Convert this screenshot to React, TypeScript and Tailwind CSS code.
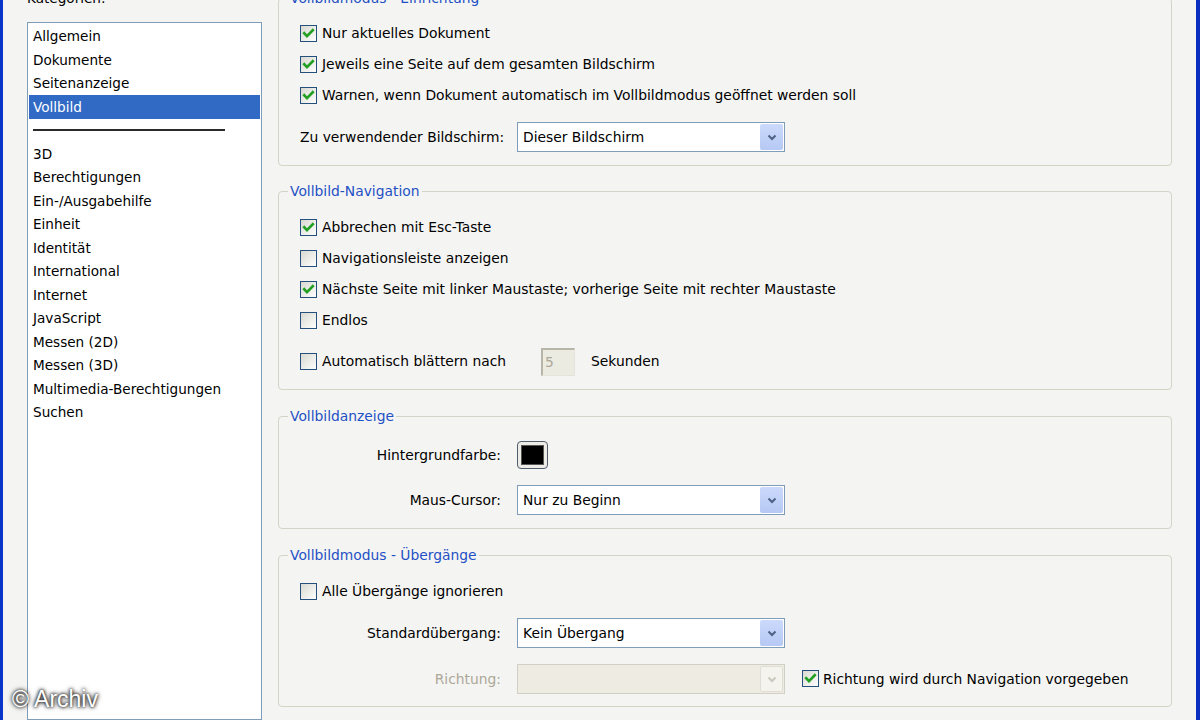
import React from "react";

const FONT = { fontFamily: '"DejaVu Sans", Verdana, sans-serif' };

function CheckBox({ checked }: { checked?: boolean }) {
  return (
    <svg width="17" height="17" viewBox="0 0 17 17" className="shrink-0">
      <defs>
        <linearGradient id="cbg" x1="0" y1="0" x2="1" y2="1">
          <stop offset="0" stopColor="#d8d8d0" />
          <stop offset="1" stopColor="#ffffff" />
        </linearGradient>
      </defs>
      <rect x="0.5" y="0.5" width="16" height="16" fill="url(#cbg)" stroke="#24507e" />
      {checked && (
        <path d="M4.2 8.2 L7 11.2 L12.8 5.2" stroke="#22a022" strokeWidth="2.6" fill="none" strokeLinecap="square" />
      )}
    </svg>
  );
}

function CheckRow({ checked, label, className = "" }: { checked?: boolean; label: string; className?: string }) {
  return (
    <div className={"flex items-center h-[31px] " + className}>
      <CheckBox checked={checked} />
      <span className="ml-[5px] whitespace-nowrap">{label}</span>
    </div>
  );
}

function Select({ value, disabled }: { value?: string; disabled?: boolean }) {
  return (
    <div
      className={
        "w-[268px] h-[30px] border flex items-center shrink-0 " +
        (disabled ? "border-[#d2d0c5] bg-[#eeece2]" : "border-[#7f9db9] bg-white")
      }
    >
      <span className="flex-1 pl-[5px] whitespace-nowrap">{value}</span>
      <div
        className={
          "w-[23px] h-[26px] mr-[1px] rounded-[2px] flex items-center justify-center " +
          (disabled ? "bg-[#f4f3ee] border border-[#e0ded4]" : "bg-gradient-to-b from-[#cbd9fb] to-[#b6c9f4]")
        }
      >
        <svg width="10" height="7" viewBox="0 0 10 7">
          <path d="M1.5 1.5 L5 5 L8.5 1.5" stroke={disabled ? "#c9c7bc" : "#4d6185"} strokeWidth="2" fill="none" />
        </svg>
      </div>
    </div>
  );
}

function Group({ title, className = "", children }: { title: string; className?: string; children: React.ReactNode }) {
  return (
    <fieldset className={"border border-[#d3d3c6] rounded-[4px] pl-[21px] " + className}>
      <legend className="-ml-[12px] px-[2px] leading-[18px] text-[#1f50c5]">{title}</legend>
      {children}
    </fieldset>
  );
}

const categories1 = ["Allgemein", "Dokumente", "Seitenanzeige", "Vollbild"];
const categories2 = [
  "3D",
  "Berechtigungen",
  "Ein-/Ausgabehilfe",
  "Einheit",
  "Identität",
  "International",
  "Internet",
  "JavaScript",
  "Messen (2D)",
  "Messen (3D)",
  "Multimedia-Berechtigungen",
  "Suchen",
];

export default function App() {
  return (
    <div
      className="relative w-[1200px] h-[720px] overflow-hidden bg-[#f4f4f2] flex text-[13.6px] text-black"
      style={FONT}
    >
      <div className="w-[3px] h-full bg-[#0a35c9] shrink-0" />

      {/* Left column */}
      <div className="ml-[24px] w-[235px] shrink-0 flex flex-col -mt-[11px]">
        <div className="leading-[18px] h-[18px] whitespace-nowrap">Kategorien:</div>
        <div className="mt-[15px] h-[760px] border border-[#7f9db9] bg-white p-[1px] pt-[1.5px]">
          {categories1.map((c) => (
            <div
              key={c}
              className={
                "h-[23.5px] flex items-center px-[4px] " + (c === "Vollbild" ? "bg-[#316ac5] text-white" : "")
              }
            >
              {c}
            </div>
          ))}
          <div className="h-[23.5px] flex items-center px-[4px]">
            <div className="w-[192px] h-[2px] bg-[#2a2a2a]" />
          </div>
          {categories2.map((c) => (
            <div key={c} className="h-[23.5px] flex items-center px-[4px] whitespace-nowrap">
              {c}
            </div>
          ))}
        </div>
      </div>

      {/* Right column */}
      <div className="ml-[16px] w-[894px] shrink-0 flex flex-col -mt-[11px] text-[13.85px]">
        <Group title="Vollbildmodus - Einrichtung" className="pt-[11px] pb-[13px]">
          <CheckRow checked label="Nur aktuelles Dokument" />
          <CheckRow checked label="Jeweils eine Seite auf dem gesamten Bildschirm" />
          <CheckRow checked label="Warnen, wenn Dokument automatisch im Vollbildmodus geöffnet werden soll" />
          <div className="mt-[11px] flex items-center">
            <span className="w-[201px] whitespace-nowrap">Zu verwendender Bildschirm:</span>
            <div className="ml-[16px]">
              <Select value="Dieser Bildschirm" />
            </div>
          </div>
        </Group>

        <Group title="Vollbild-Navigation" className="mt-[16px] pt-[12px] pb-[12px]">
          <CheckRow checked label="Abbrechen mit Esc-Taste" />
          <CheckRow label="Navigationsleiste anzeigen" />
          <CheckRow checked label="Nächste Seite mit linker Maustaste; vorherige Seite mit rechter Maustaste" />
          <CheckRow label="Endlos" />
          <div className="mt-[10px] h-[31px] flex items-center">
            <CheckBox />
            <span className="ml-[5px] w-[219px] whitespace-nowrap">Automatisch blättern nach</span>
            <div className="w-[34px] h-[28px] border-t-2 border-l-2 border-[#b8b6a8] border-r border-b border-r-[#e6e4da] border-b-[#e6e4da] bg-[#ecebe2] text-[#aca899] pl-[2px] flex items-center">
              5
            </div>
            <span className="ml-[16px]">Sekunden</span>
          </div>
        </Group>

        <Group title="Vollbildanzeige" className="mt-[17px] pt-[15px] pb-[13px]">
          <div className="h-[30px] flex items-center">
            <span className="w-[201px] text-right whitespace-nowrap">Hintergrundfarbe:</span>
            <div className="ml-[16px] w-[31px] h-[28px] rounded-[4px] border border-[#4f5d6c] bg-[#ecebe6] p-[3px]">
              <div className="w-full h-full bg-black border border-[#555]" />
            </div>
          </div>
          <div className="mt-[15px] flex items-center">
            <span className="w-[201px] text-right whitespace-nowrap">Maus-Cursor:</span>
            <div className="ml-[16px]">
              <Select value="Nur zu Beginn" />
            </div>
          </div>
        </Group>

        <Group title="Vollbildmodus - Übergänge" className="mt-[17px] pt-[12px] pb-[12px]">
          <CheckRow label="Alle Übergänge ignorieren" />
          <div className="mt-[11px] flex items-center">
            <span className="w-[201px] text-right whitespace-nowrap">Standardübergang:</span>
            <div className="ml-[16px]">
              <Select value="Kein Übergang" />
            </div>
          </div>
          <div className="mt-[16px] flex items-center">
            <span className="w-[201px] text-right whitespace-nowrap text-[#aca899]">Richtung:</span>
            <div className="ml-[16px]">
              <Select disabled />
            </div>
            <div className="ml-[17px] flex items-center">
              <CheckBox checked />
              <span className="ml-[4px] whitespace-nowrap">Richtung wird durch Navigation vorgegeben</span>
            </div>
          </div>
        </Group>
      </div>

      <div className="flex-1" />
      <div className="w-[4px] h-full bg-[#0a2fc0] shrink-0" />

      <div
        className="absolute left-[12px] top-[682px] text-[23px] text-white whitespace-nowrap [text-shadow:0_0_3px_#000,0_0_5px_#000]"
        style={{ fontFamily: '"Liberation Sans", Arial, sans-serif' }}
      >
        © Archiv
      </div>
    </div>
  );
}
